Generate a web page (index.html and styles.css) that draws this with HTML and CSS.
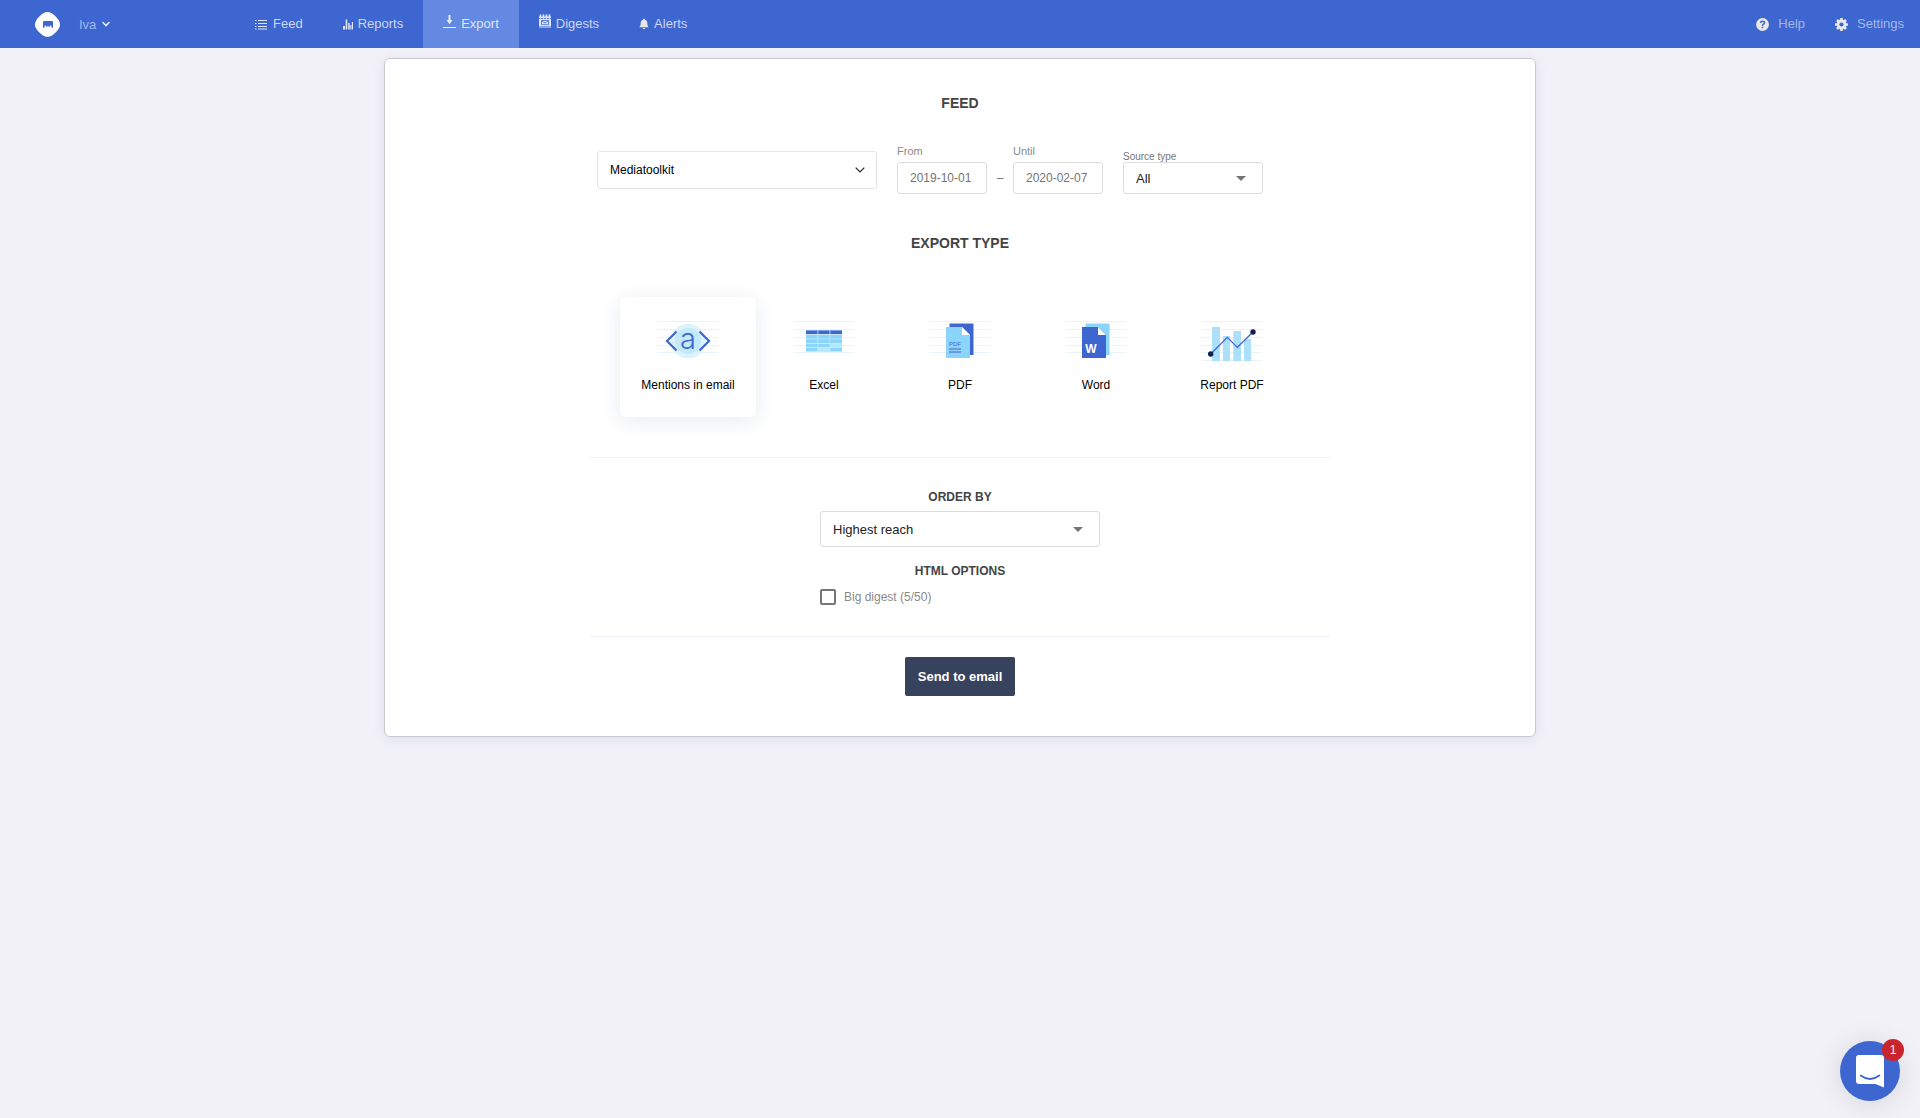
FILE: index.html
```html
<!DOCTYPE html>
<html lang="en">
<head>
<meta charset="utf-8">
<meta name="viewport" content="width=device-width, initial-scale=1">
<title>Export</title>
<link rel="stylesheet" href="styles.css">
</head>
<body>
<header class="topbar">
  <div class="brand">
    <a class="brand-logo" href="#" aria-label="Home">
      <svg width="25" height="25" viewBox="0 0 25 25"><path d="M12.500 0C15.500 0 17.800 1.600 20.600 4.400C23.400 7.200 25 9.500 25 12.500C25 15.500 23.400 17.800 20.600 20.600C17.800 23.400 15.500 25 12.500 25C9.500 25 7.200 23.400 4.400 20.600C1.600 17.800 0 15.500 0 12.500C0 9.500 1.600 7.200 4.400 4.400C7.200 1.600 9.500 0 12.500 0Z" fill="#fff"/><path d="M8 9.800Q8 8.900 9 8.900H17Q18 8.900 18 9.800V15.800H16.500V14.200L15.500 13.300L14.500 14.200V15.200H13.800L13 13.300L12.100 15.200H11.500V14.200L10.500 13.300L9.500 14.200V15.800H8Z" fill="#3d66d1"/></svg>
    </a>
    <button class="account" type="button">Iva
      <svg width="8" height="8" viewBox="0 0 8 8"><path d="M1 2.500L4 5.500L7 2.500" fill="none" stroke="#e4eaf9" stroke-width="1.600" stroke-linecap="round"/></svg>
    </button>
  </div>
  <nav class="tabs" aria-label="Main">
    <a class="tab" href="#"><svg width="13" height="12" viewBox="0 0 13 12"><path d="M0 2.500H1.500M0 5.500H1.500M0 8.500H1.500M0 11H1.500M3 2.500H12M3 5.500H12M3 8.500H12M3 11H12" stroke="#dfe5f5"/></svg>Feed</a>
    <a class="tab" href="#"><svg width="10" height="12" viewBox="0 0 10 12"><path d="M0 8H2V11.500H0ZM2.700 1.500H4.300V11.500H2.700ZM5.200 5H6.700V11.500H5.200ZM7.300 7H8.400V11.500H7.300ZM8.900 4H10V11.500H8.900Z" fill="#dfe5f5"/></svg>Reports</a>
    <a class="tab tab-active" href="#" aria-current="page"><svg width="13" height="18" viewBox="0 0 13 18"><path d="M6.500 3V9" stroke="#e8edfa" stroke-width="2"/><path d="M3.500 8H9.500L6.500 12.200Z" fill="#e8edfa"/><path d="M0 15.500H13" stroke="#e8edfa"/></svg>Export</a>
    <a class="tab tab-digests" href="#"><svg width="12" height="14" viewBox="0 0 12 14"><path d="M1.500 4V1M4.500 4V1M7.500 4V1M10.500 4V1" stroke="#dfe5f5" stroke-width="1.700" stroke-linecap="round"/><path d="M0 2.500H12V4H0ZM0 5H12V12H0ZM0 12.600H12V13.600H0Z" fill="#dfe5f5"/><path d="M2.500 6.500H9.500V10.700H2.500ZM2.500 6.700L6 9L9.500 6.700" fill="none" stroke="#3d66d1" stroke-width="0.800"/></svg>Digests</a>
    <a class="tab" href="#"><svg width="10" height="12" viewBox="0 0 10 12"><path d="M5 0.800C5.700 0.800 6 1.300 6 1.800C7.900 2.300 8.300 3.800 8.300 5.500C8.300 7.500 9 8.500 9.900 9.300H0.100C1 8.500 1.700 7.500 1.700 5.500C1.700 3.800 2.100 2.300 4 1.800C4 1.300 4.300 0.800 5 0.800ZM3.800 10H6.200Q6 11.200 5 11.200Q4 11.200 3.800 10Z" fill="#e8e8ea"/></svg>Alerts</a>
  </nav>
  <div class="tools">
    <a class="tool" href="#"><svg width="13" height="13" viewBox="0 0 13 13"><circle cx="6.500" cy="6.500" r="6.400" fill="#e8e8ea"/><path d="M4.500 5C4.600 3.700 5.400 3.200 6.500 3.200C7.700 3.200 8.500 3.800 8.500 4.800C8.500 6 6.500 6.200 6.500 7.700" fill="none" stroke="#3d66d1" stroke-width="1.500"/><path d="M5.700 8.700H7.300V10.200H5.700Z" fill="#3d66d1"/></svg>Help</a>
    <a class="tool" href="#"><svg width="13" height="13" viewBox="0 0 13 13"><g stroke="#e8e8ea" stroke-width="2.600"><path d="M6.500 0V13M0 6.500H13M2 2L11 11M11 2L2 11"/></g><circle cx="6.500" cy="6.500" r="4.900" fill="#e8e8ea"/><circle cx="6.500" cy="6.500" r="2.100" fill="#3d66d1"/></svg>Settings</a>
  </div>
</header>

<main class="card">
  <form class="export">
    <h1 class="title">FEED</h1>
    <div class="filters">
      <div class="select select-feed">
        <select class="select-input" aria-label="Feed"><option>Mediatoolkit</option></select>
        <svg class="select-mark" width="10" height="6" viewBox="0 0 10 6"><path d="M0.700 0.700L5 5L9.300 0.700" fill="none" stroke="#222" stroke-width="1.200"/></svg>
      </div>
      <div class="range">
        <div class="field">
          <label class="label" for="from">From</label>
          <input class="date" id="from" type="text" value="2019-10-01">
        </div>
        <span class="dash">–</span>
        <div class="field">
          <label class="label" for="until">Until</label>
          <input class="date" id="until" type="text" value="2020-02-07">
        </div>
      </div>
      <div class="field field-source">
        <label class="label label-small" for="source">Source type</label>
        <div class="select select-source">
          <select class="select-input" id="source"><option>All</option></select>
          <svg class="select-mark" width="10" height="5" viewBox="0 0 10 5"><path d="M0 0H10L5 5Z" fill="#757575"/></svg>
        </div>
      </div>
    </div>

    <h2 class="title title-type">EXPORT TYPE</h2>
    <div class="types">
      <button class="type type-active" type="button" aria-pressed="true">
        <svg width="60" height="48" viewBox="0 0 60 48"><path d="M0 4.500H60M0 12.500H60M0 20.500H60M0 28.500H60M0 35.500H60" stroke="#e6f4fa"/><circle cx="30" cy="24" r="17.300" fill="#dcf2fd"/><circle cx="30" cy="24" r="13" fill="#c3e9fb"/><path d="M18.500 14.500L9 24L18.500 33.500M41.500 14.500L51 24L41.500 33.500" fill="none" stroke="#3d66d1" stroke-width="2.200"/><text class="glyph-a" x="30" y="32" text-anchor="middle" font-size="29" fill="#3d66d1">a</text></svg>
        <span>Mentions in email</span>
      </button>
      <button class="type" type="button" aria-pressed="false">
        <svg width="60" height="48" viewBox="0 0 60 48"><path d="M0 4.500H60M0 12.500H60M0 20.500H60M0 28.500H60M0 35.500H60" stroke="#e6f4fa"/><path d="M12 13H48V35H12Z" fill="#c3e9fb"/><path d="M12 13.500H23.500V17H12ZM24.300 13.500H35.500V17H24.300ZM36.300 13.500H48V17H36.300Z" fill="#3d66d1"/><path d="M12 18H23.500V21.500H12ZM24.300 18H35.500V21.500H24.300ZM36.300 18H48V21.500H36.300ZM12 22.300H23.500V26H12ZM24.300 22.300H35.500V26H24.300ZM36.300 22.300H48V26H36.300ZM12 27H23.500V30H12ZM24.300 27H35.500V30H24.300ZM12 31H23.500V34H12ZM36.300 31H48V34H36.300Z" fill="#8bd4fb"/><path d="M36.300 27H48V30H36.300ZM24.300 31H35.500V34H24.300Z" fill="#b3e9ff"/></svg>
        <span>Excel</span>
      </button>
      <button class="type" type="button" aria-pressed="false">
        <svg width="60" height="48" viewBox="0 0 60 48"><path d="M0 4.500H60M0 12.500H60M0 20.500H60M0 28.500H60M0 35.500H60" stroke="#e6f4fa"/><path d="M19.500 6.500H43.500V38H19.500Z" fill="#3d66d1"/><path d="M16 10H32L40 18V41H16Z" fill="#8bd4fb"/><path d="M32 10L40 18H32Z" fill="#fff"/><text x="25" y="29" text-anchor="middle" font-size="6" fill="#3d66d1">PDF</text><path d="M19 32H31M19 35H31" stroke="#6f97de" stroke-width="2"/></svg>
        <span>PDF</span>
      </button>
      <button class="type" type="button" aria-pressed="false">
        <svg width="60" height="48" viewBox="0 0 60 48"><path d="M0 4.500H60M0 12.500H60M0 20.500H60M0 28.500H60M0 35.500H60" stroke="#e6f4fa"/><path d="M19.500 6.500H43.500V38H19.500Z" fill="#8bd4fb"/><path d="M16 10H32L40 18V41H16Z" fill="#3d66d1"/><path d="M32 10L40 18H32Z" fill="#fff"/><text x="25" y="36" text-anchor="middle" font-size="12" font-weight="700" fill="#fff">W</text></svg>
        <span>Word</span>
      </button>
      <button class="type" type="button" aria-pressed="false">
        <svg width="60" height="48" viewBox="0 0 60 48"><path d="M0 4.500H60M0 12.500H60M0 20.500H60M0 28.500H60M0 35.500H60M0 43.500H60" stroke="#e6f4fa"/><path d="M10 10H18V44H10ZM21 19H28V44H21ZM31.300 14H39V44H31.300ZM42 22H49V44H42Z" fill="#abe0fb"/><path d="M8.700 37L25.300 20.300L35.300 30.300L51 15" fill="none" stroke="#3d66d1" stroke-width="1.200"/><circle cx="8.700" cy="37" r="2.700" fill="#141f4d"/><circle cx="51" cy="15" r="2.700" fill="#141f4d"/></svg>
        <span>Report PDF</span>
      </button>
    </div>

    <section class="options">
      <label class="subtitle" for="order">ORDER BY</label>
      <div class="select select-order">
        <select class="select-input" id="order"><option>Highest reach</option></select>
        <svg class="select-mark" width="10" height="5" viewBox="0 0 10 5"><path d="M0 0H10L5 5Z" fill="#757575"/></svg>
      </div>
      <h3 class="subtitle subtitle-html">HTML OPTIONS</h3>
      <label class="check"><input class="check-box" type="checkbox">Big digest (5/50)</label>
    </section>

    <button class="send" type="submit">Send to email</button>
  </form>
</main>

<button class="chat" type="button" aria-label="Open chat, 1 unread">
  <svg width="28" height="33" viewBox="0 0 28 33"><path d="M3 0H25Q28 0 28 3V32.500L19.500 29H3Q0 29 0 26V3Q0 0 3 0Z" fill="#fff"/><path d="M4.700 20.500Q14 27.500 23.300 20.500" fill="none" stroke="#3d66d1" stroke-width="1.800" stroke-linecap="round"/></svg>
  <span class="chat-count">1</span>
</button>
</body>
</html>
```
FILE: styles.css
```css
* {
  box-sizing: border-box;
}

body {
  margin: 0;
  min-height: 100vh;
  background: #f2f1f7;
  color: #000;
  font: 12px/16px "Liberation Sans", Arial, sans-serif;
}

button,
input,
select {
  margin: 0;
  font-family: inherit;
}

svg {
  display: block;
  flex: none;
}

svg text {
  font-family: "Liberation Sans", Arial, sans-serif;
}

svg .glyph-a {
  font-family: Inter, "Liberation Sans", sans-serif;
  font-weight: 300;
}

/* Top bar */
.topbar {
  display: flex;
  height: 48px;
  background: #3d66d1;
  font-size: 13px;
}

.brand {
  display: flex;
  align-items: center;
  gap: 19px;
  width: 235px;
  padding-left: 35px;
}

.account {
  display: flex;
  align-items: center;
  gap: 6px;
  padding: 0;
  border: 0;
  background: none;
  color: #a5b7e8;
  font-size: 13px;
  cursor: pointer;
}

.tabs {
  display: flex;
}

.tab {
  display: flex;
  align-items: center;
  gap: 5px;
  padding: 0 20px;
  color: #cdd7f2;
  text-decoration: none;
}

.tab svg {
  margin-bottom: 1px;
}

.tab-active {
  background: #6489e3;
  color: #dde5f9;
}

.tab-active svg,
.tab-digests svg {
  margin-bottom: 6px;
}

.tools {
  display: flex;
  gap: 30px;
  margin-left: auto;
  padding-right: 16px;
}

.tool {
  display: flex;
  align-items: center;
  gap: 9px;
  color: #a5b7e8;
  text-decoration: none;
}

/* Card */
.card {
  width: 60%;
  min-width: 760px;
  margin: 10px auto;
  padding: 34px 0 40px;
  border: 1px solid #c9cad0;
  border-radius: 6px;
  background: #fff;
  box-shadow: 0 2px 12px rgba(60, 80, 120, 0.12);
}

.export {
  display: flex;
  flex-direction: column;
  align-items: center;
  width: 740px;
  margin: 0 auto;
}

.title {
  margin: 0;
  color: #444;
  font-size: 14px;
  line-height: 20px;
}

.title-type {
  margin-top: 39px;
}

.filters {
  display: flex;
  align-items: center;
  align-self: stretch;
  gap: 20px;
  margin-top: 33px;
  padding-left: 7px;
}

.range {
  display: flex;
  align-items: flex-end;
  justify-content: space-between;
  width: 206px;
}

.field {
  display: flex;
  flex-direction: column;
  gap: 6px;
}

.field-source {
  gap: 0;
  align-self: flex-end;
}

.label {
  color: #8a8a8a;
  font-size: 11px;
  line-height: 10px;
}

.label-small {
  color: #757575;
  font-size: 10px;
}

.date {
  width: 90px;
  height: 32px;
  padding: 0 12px;
  border: 1px solid #dcdcdc;
  border-radius: 3px;
  background: #fff;
  color: #757575;
  font-size: 12px;
}

.dash {
  color: #757575;
  line-height: 32px;
}

.select {
  display: grid;
  align-items: center;
}

.select-input,
.select-mark {
  grid-area: 1 / 1;
}

.select-input {
  width: 100%;
  height: 100%;
  padding: 0 12px;
  border: 1px solid #dcdcdc;
  border-radius: 3px;
  appearance: none;
  background: #fff;
  color: #212121;
  font-size: 13px;
}

.select-mark {
  justify-self: end;
  margin-right: 17px;
  pointer-events: none;
}

.select-feed {
  width: 280px;
  height: 38px;
}

.select-feed .select-input {
  border-color: #e4e4e6;
  color: #000;
  font-size: 12px;
}

.select-feed .select-mark {
  margin-right: 12px;
}

.select-source {
  width: 140px;
  height: 32px;
}

.select-order {
  width: 280px;
  height: 36px;
}

/* Export types */
.types {
  display: flex;
  margin-top: 44px;
}

.type {
  display: flex;
  flex-direction: column;
  align-items: center;
  gap: 12px;
  width: 136px;
  height: 120px;
  padding: 20px 0 0;
  border: 0;
  border-radius: 5px;
  background: none;
  color: #000;
  font-size: 12px;
  line-height: 16px;
  cursor: pointer;
}

.type-active {
  background: #fff;
  box-shadow: 0 4px 20px rgba(60, 80, 120, 0.12);
}

/* Options */
.options {
  display: flex;
  flex-direction: column;
  align-items: center;
  align-self: stretch;
  margin: 40px 0 20px;
  padding: 32px 0 31px;
  border: 1px solid #efeff5;
  border-width: 1px 0;
}

.subtitle {
  margin: 0 0 7px;
  color: #444;
  font-size: 12px;
  font-weight: 700;
  line-height: 14px;
}

.subtitle-html {
  margin: 17px 0 11px;
}

.check {
  display: flex;
  align-items: center;
  gap: 8px;
  width: 280px;
  color: #8a8a8a;
}

.check-box {
  width: 16px;
  height: 16px;
  border: 2px solid #757575;
  border-radius: 2px;
  appearance: none;
  background: #fff;
}

.check-box:checked {
  background: #757575;
}

.send {
  width: 110px;
  height: 39px;
  padding: 0;
  border: 0;
  border-radius: 2px;
  background: #37425c;
  color: #fff;
  font-size: 13px;
  font-weight: 700;
  cursor: pointer;
}

/* Chat launcher */
.chat {
  position: fixed;
  right: 20px;
  bottom: 17px;
  display: grid;
  place-items: center;
  width: 60px;
  height: 60px;
  padding: 0;
  border: 0;
  border-radius: 50%;
  background: #3d66d1;
  box-shadow: 0 2px 28px rgba(0, 0, 0, 0.12);
  cursor: pointer;
}

.chat-count {
  position: absolute;
  top: -2px;
  right: -4px;
  width: 22px;
  height: 22px;
  border-radius: 50%;
  background: #c9252d;
  color: #fff;
  font-size: 12px;
  line-height: 22px;
  text-align: center;
}
```
